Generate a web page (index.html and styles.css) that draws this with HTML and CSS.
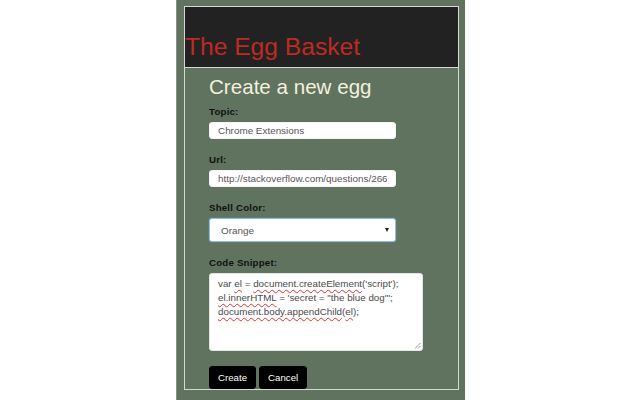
FILE: index.html
```html
<!DOCTYPE html>
<html>
<head>
<meta charset="utf-8">
<link rel="stylesheet" href="styles.css">
</head>
<body>
<div class="popup">
  <div class="box">
    <header class="head"><h1 class="title">The Egg Basket</h1></header>
    <main class="content">
      <h2 class="heading">Create a new egg</h2>
      <div class="field">
        <label class="label">Topic:</label>
        <input class="input" type="text" value="Chrome Extensions">
      </div>
      <div class="field">
        <label class="label">Url:</label>
        <input class="input" type="text" value="http://stackoverflow.com/questions/26603227/how-to-inject">
      </div>
      <div class="field">
        <label class="label">Shell Color:</label>
        <div class="select-wrap"><select class="select"><option>Orange</option></select></div>
      </div>
      <div class="field">
        <label class="label">Code Snippet:</label>
        <div class="code">
          <div class="line">var <span class="sp">el</span> = <span class="sp">document.createElement</span>('script');</div>
          <div class="line"><span class="sp">el.innerHTML</span> = 'secret = "the blue dog"';</div>
          <div class="line"><span class="sp">document.body.appendChild</span>(<span class="sp">el</span>);</div>
          <svg class="grip" width="7" height="7" viewBox="0 0 7 7"><path d="M6.5 1 L1 6.5 M6.5 4 L4 6.5" stroke="#999" stroke-width="1" fill="none"/></svg>
        </div>
      </div>
      <div class="buttons">
        <button class="btn">Create</button>
        <button class="btn">Cancel</button>
      </div>
    </main>
  </div>
</div>
</body>
</html>
```
FILE: styles.css
```css
html, body {
  margin: 0;
  padding: 0;
  background: #ffffff;
}
body {
  font-family: "Liberation Sans", Arial, sans-serif;
}
.popup {
  margin-left: 176px;
  width: 289px;
  height: 400px;
  box-sizing: border-box;
  border-left: 1px solid #8a8f8a;
  background: #5f735e;
  padding: 6px 6px 0 7px;
}
.box {
  height: 384px;
  box-sizing: border-box;
  border: 1px solid #d5d9d4;
}
.head {
  height: 60px;
  background: #222222;
  border-bottom: 1px solid #d5d9d4;
}
.title {
  margin: 0;
  padding-top: 26px;
  font-size: 24.6px;
  line-height: 28px;
  font-weight: normal;
  color: #bf2a22;
}
.content {
  padding: 7px 0 0 24px;
}
.heading {
  margin: 0 0 7px;
  font-size: 20.6px;
  line-height: 24px;
  font-weight: normal;
  color: #f3f0de;
}
.field {
  margin-bottom: 15px;
}
.label {
  display: block;
  font-size: 9.7px;
  line-height: 12px;
  font-weight: bold;
  color: #111;
  margin-bottom: 4px;
  letter-spacing: 0.2px;
}
.input {
  display: block;
  width: 187px;
  height: 17px;
  box-sizing: border-box;
  border: 1px solid #f4f4f4;
  border-radius: 3px;
  background: #fff;
  padding: 0 8px;
  font-family: "Liberation Sans", Arial, sans-serif;
  font-size: 9.9px;
  color: #555;
  outline: none;
}
.select-wrap {
  position: relative;
  width: 187px;
  height: 24px;
}
.select-wrap::after {
  content: "";
  position: absolute;
  right: 7px;
  top: 10px;
  border-left: 2.5px solid transparent;
  border-right: 2.5px solid transparent;
  border-top: 4px solid #222;
}
.select {
  appearance: none;
  -webkit-appearance: none;
  width: 187px;
  height: 24px;
  box-sizing: border-box;
  border: 1px solid #8fbbdc;
  box-shadow: 0 0 2px rgba(102, 175, 233, 0.7);
  border-radius: 3px;
  background: #fff;
  padding: 0 0 0 11px;
  font-family: "Liberation Sans", Arial, sans-serif;
  font-size: 9.9px;
  color: #555;
  outline: none;
}
.code {
  position: relative;
  width: 214px;
  height: 78px;
  box-sizing: border-box;
  border: 1px solid #e6e6e6;
  border-radius: 3px;
  background: #fff;
  padding: 3px 8px;
  font-size: 9.8px;
  line-height: 14px;
  color: #4a4a4a;
  white-space: nowrap;
}
.sp {
  text-decoration: underline wavy #e03030;
  text-decoration-thickness: 1px;
  text-underline-offset: 2px;
}
.grip {
  position: absolute;
  right: 1px;
  bottom: 1px;
}
.buttons {
  display: flex;
  gap: 3px;
  margin-top: 13px;
}
.btn {
  height: 23px;
  padding: 0 8px;
  border: 1px solid #000;
  border-radius: 3px;
  background: #000;
  color: #fff;
  font-family: "Liberation Sans", Arial, sans-serif;
  font-size: 9.7px;
}
```
